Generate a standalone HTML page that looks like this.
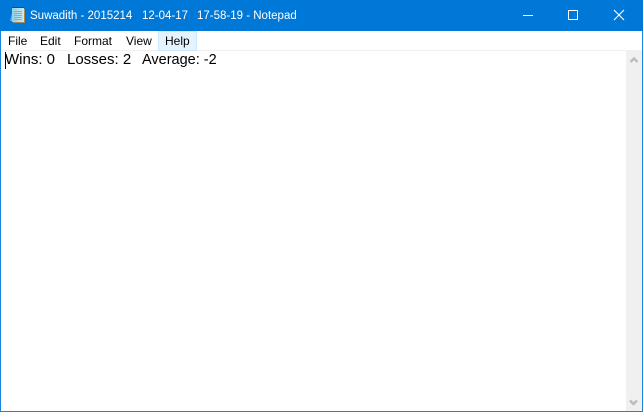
<!DOCTYPE html>
<html><head><meta charset="utf-8">
<style>
html,body{margin:0;padding:0;background:#fff}
#w{position:relative;width:643px;height:412px;overflow:hidden;background:#fff;font-family:"Liberation Sans",sans-serif}
#w div{position:absolute}
.t{white-space:pre;line-height:16px}
.m{font-size:12px;color:#000;top:33px}
.h{font-size:11.5px;color:#fff;top:8px}
.b{font-size:15px;color:#000;top:52px}
</style></head><body>
<div id="w">
<div style="left:0;top:0;width:643px;height:31px;background:#0078d7"></div>
<svg style="position:absolute;left:9px;top:6px" width="18" height="18" viewBox="0 0 18 18">
<defs><linearGradient id="g" x1="0" y1="0" x2="1" y2="0"><stop offset="0" stop-color="#8fd0e6"/><stop offset="1" stop-color="#d3e9ee"/></linearGradient></defs>
<path d="M1 15 L4 3 H6 V15Z" fill="#5fb0e6"/>
<rect x="4" y="3" width="12" height="14" fill="#a9884f"/>
<rect x="3" y="2" width="12" height="14" fill="url(#g)"/>
<path d="M5 5.500H13M5 7.500H13M5 9.500H13M5 11.500H13M5 13.500H13" stroke="#7fb3c6" stroke-width="1"/>
<path d="M4 2V1M6 2V1M8 2V1M10 2V1M12 2V1M14 2V1" stroke="#333" stroke-width="1.200"/>
</svg>
<div class="t h" style="left:30px">Suwadith - 2015214</div>
<div class="t h" style="left:142px">12-04-17</div>
<div class="t h" style="left:197px">17-58-19 - Notepad</div>
<svg style="position:absolute;left:500px;top:0" width="143" height="31" viewBox="0 0 143 31">
<path d="M23 15.500H33" stroke="#fff" stroke-width="1"/>
<rect x="68.500" y="10.500" width="9" height="9" fill="none" stroke="#fff" stroke-width="1"/>
<path d="M114 10L124 20M124 10L114 20" stroke="#fff" stroke-width="1.100"/>
</svg>
<div style="left:0;top:31px;width:1px;height:381px;background:#1a85dc"></div>
<div style="left:642px;top:31px;width:1px;height:381px;background:#1a85dc"></div>
<div style="left:0;top:411px;width:643px;height:1px;background:#1a85dc"></div>
<div style="left:1px;top:50px;width:641px;height:1px;background:#f0f0f0"></div>
<div style="left:158px;top:31px;width:37px;height:18px;background:#e5f3ff;border:1px solid #cce8ff"></div>
<div class="t m" style="left:8px">File</div>
<div class="t m" style="left:40px">Edit</div>
<div class="t m" style="left:74px">Format</div>
<div class="t m" style="left:126px">View</div>
<div class="t m" style="left:165px">Help</div>
<div class="t b" style="left:5px">Wins: 0</div>
<div class="t b" style="left:67px">Losses: 2</div>
<div class="t b" style="left:142px;font-size:14.5px">Average: -2</div>
<div style="left:5px;top:52px;width:1px;height:17px;background:#000"></div>
<div style="left:626px;top:51px;width:16px;height:360px;background:#f0f0f0"></div>
<svg style="position:absolute;left:626px;top:51px" width="16" height="360" viewBox="0 0 16 360">
<path d="M4.500 11L8 7.500L11.500 11" fill="none" stroke="#bdbdbd" stroke-width="2.500"/>
<path d="M4 349.500L7.500 353L11 349.500" fill="none" stroke="#bdbdbd" stroke-width="2.500"/>
</svg>
</div>
</body></html>
